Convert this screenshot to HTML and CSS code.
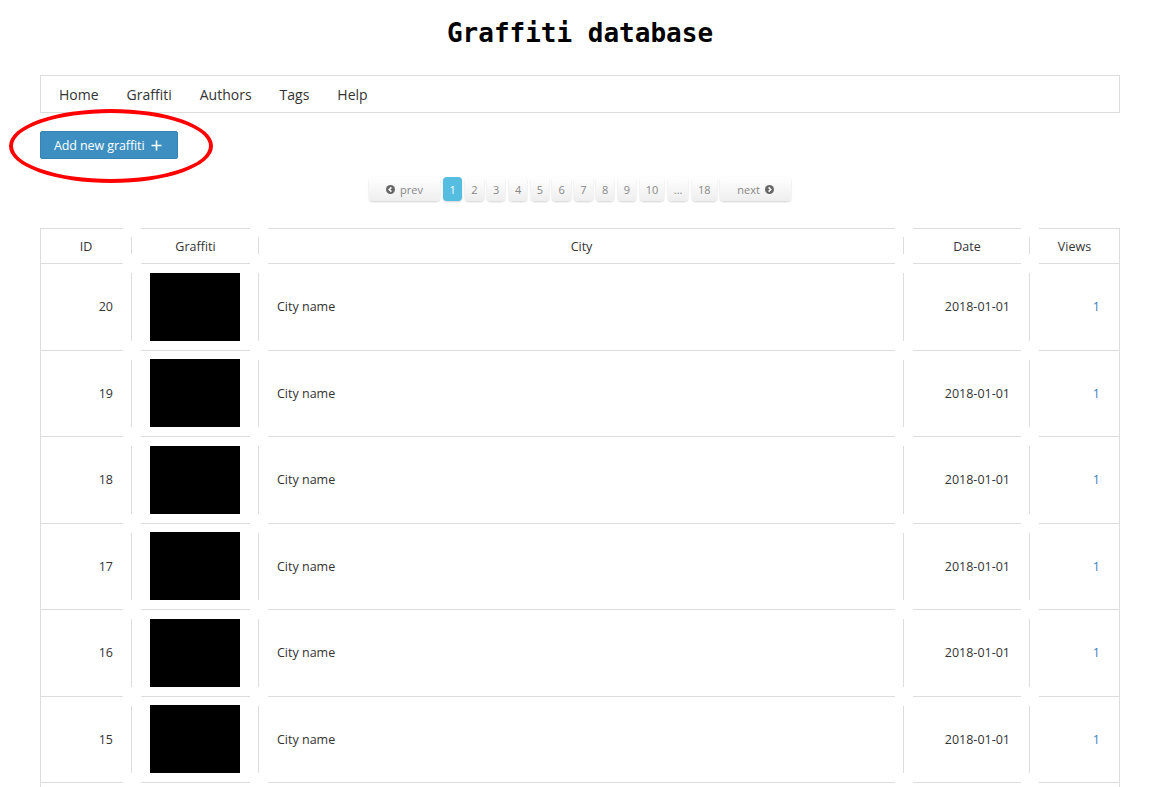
FILE: index.html
```html
<!DOCTYPE html>
<html lang="en">
<head>
<meta charset="utf-8">
<title>Graffiti database</title>
<link rel="stylesheet" href="styles.css">
</head>
<body>
<h1 class="title">Graffiti database</h1>
<nav class="nav">
  <a href="#">Home</a>
  <a href="#">Graffiti</a>
  <a href="#">Authors</a>
  <a href="#">Tags</a>
  <a href="#">Help</a>
</nav>
<div class="actions">
  <a class="btn-add" href="#">Add new graffiti
    <svg class="plus" width="11" height="11" viewBox="0 0 11 11"><path d="M5.5 0.5v10M0.5 5.5h10" stroke="#fff" stroke-width="1.6" fill="none"/></svg>
  </a>
</div>
<div class="pager">
  <a class="pg wide" href="#"><svg class="ico" width="9" height="9" viewBox="0 0 10 10"><circle cx="5" cy="5" r="5" fill="#666"/><path d="M6 2.6L3.6 5L6 7.4" stroke="#fff" stroke-width="1.7" fill="none"/></svg>prev</a>
  <a class="pg active" href="#">1</a>
  <a class="pg" href="#">2</a>
  <a class="pg" href="#">3</a>
  <a class="pg" href="#">4</a>
  <a class="pg" href="#">5</a>
  <a class="pg" href="#">6</a>
  <a class="pg" href="#">7</a>
  <a class="pg" href="#">8</a>
  <a class="pg" href="#">9</a>
  <a class="pg" href="#">10</a>
  <a class="pg" href="#">...</a>
  <a class="pg" href="#">18</a>
  <a class="pg wide" href="#">next<svg class="ico" width="9" height="9" viewBox="0 0 10 10"><circle cx="5" cy="5" r="5" fill="#666"/><path d="M4 2.6L6.4 5L4 7.4" stroke="#fff" stroke-width="1.7" fill="none"/></svg></a>
</div>
<div class="table">
  <div class="row head">
    <div class="cell c-id">ID</div><div class="sep"></div>
    <div class="cell c-img">Graffiti</div><div class="sep"></div>
    <div class="cell c-city">City</div><div class="sep"></div>
    <div class="cell c-date">Date</div><div class="sep"></div>
    <div class="cell c-views">Views</div>
  </div>
  <div class="row">
    <div class="cell c-id">20</div><div class="sep"></div>
    <div class="cell c-img"><div class="thumb"></div></div><div class="sep"></div>
    <div class="cell c-city">City name</div><div class="sep"></div>
    <div class="cell c-date">2018-01-01</div><div class="sep"></div>
    <div class="cell c-views"><a href="#">1</a></div>
  </div>
  <div class="row">
    <div class="cell c-id">19</div><div class="sep"></div>
    <div class="cell c-img"><div class="thumb"></div></div><div class="sep"></div>
    <div class="cell c-city">City name</div><div class="sep"></div>
    <div class="cell c-date">2018-01-01</div><div class="sep"></div>
    <div class="cell c-views"><a href="#">1</a></div>
  </div>
  <div class="row">
    <div class="cell c-id">18</div><div class="sep"></div>
    <div class="cell c-img"><div class="thumb"></div></div><div class="sep"></div>
    <div class="cell c-city">City name</div><div class="sep"></div>
    <div class="cell c-date">2018-01-01</div><div class="sep"></div>
    <div class="cell c-views"><a href="#">1</a></div>
  </div>
  <div class="row">
    <div class="cell c-id">17</div><div class="sep"></div>
    <div class="cell c-img"><div class="thumb"></div></div><div class="sep"></div>
    <div class="cell c-city">City name</div><div class="sep"></div>
    <div class="cell c-date">2018-01-01</div><div class="sep"></div>
    <div class="cell c-views"><a href="#">1</a></div>
  </div>
  <div class="row">
    <div class="cell c-id">16</div><div class="sep"></div>
    <div class="cell c-img"><div class="thumb"></div></div><div class="sep"></div>
    <div class="cell c-city">City name</div><div class="sep"></div>
    <div class="cell c-date">2018-01-01</div><div class="sep"></div>
    <div class="cell c-views"><a href="#">1</a></div>
  </div>
  <div class="row">
    <div class="cell c-id">15</div><div class="sep"></div>
    <div class="cell c-img"><div class="thumb"></div></div><div class="sep"></div>
    <div class="cell c-city">City name</div><div class="sep"></div>
    <div class="cell c-date">2018-01-01</div><div class="sep"></div>
    <div class="cell c-views"><a href="#">1</a></div>
  </div>
  <div class="row">
    <div class="cell c-id">14</div><div class="sep"></div>
    <div class="cell c-img"><div class="thumb"></div></div><div class="sep"></div>
    <div class="cell c-city">City name</div><div class="sep"></div>
    <div class="cell c-date">2018-01-01</div><div class="sep"></div>
    <div class="cell c-views"><a href="#">1</a></div>
  </div>
</div>
<div class="ring"></div>
</body>
</html>
```

FILE: styles.css
```css
html {
  background: #fff;
}

body {
  margin: 0 40px;
  font-family: "Open Sans", "DejaVu Sans", sans-serif;
  color: #333;
}

.title {
  margin: 18px 0 0;
  font: bold 26px/30px "DejaVu Sans Mono", monospace;
  text-align: center;
  color: #000;
}

.nav {
  margin-top: 27px;
  height: 38px;
  box-sizing: border-box;
  border: 1px solid #ddd;
  display: flex;
  align-items: flex-start;
  padding-left: 4px;
}

.nav a {
  padding: 2px 14px 0;
  line-height: 34px;
  font-size: 14px;
  color: #333;
  text-decoration: none;
}

.actions {
  margin-top: 18px;
  height: 28px;
}

.btn-add {
  display: inline-flex;
  align-items: center;
  gap: 7px;
  height: 28px;
  box-sizing: border-box;
  padding: 0 15px 0 13px;
  background: #3d8fc1;
  border: 1px solid #3784b4;
  border-radius: 2px;
  color: #fff;
  font-size: 12.5px;
  letter-spacing: -0.1px;
  text-decoration: none;
}

.ring {
  position: absolute;
  left: 9px;
  top: 109px;
  z-index: 5;
  width: 204px;
  height: 74px;
  box-sizing: border-box;
  border: 4px solid #f00;
  border-radius: 50%;
  pointer-events: none;
}

.pager {
  display: flex;
  justify-content: center;
  gap: 3.5px;
  margin-top: 18px;
}

.pg {
  display: inline-flex;
  align-items: center;
  justify-content: center;
  gap: 5px;
  height: 24px;
  min-width: 18px;
  box-sizing: border-box;
  padding: 0 6px;
  border-radius: 4px;
  background: linear-gradient(#ffffff, #eeeeee);
  box-shadow: 0 1px 2px rgba(0, 0, 0, 0.18);
  color: #888;
  font-size: 11px;
  text-decoration: none;
}

.pg.wide {
  width: 71px;
}

.pg.active {
  background: #55bde0;
  color: #fff;
}

.table {
  margin-top: 27px;
  border-left: 1px solid #ddd;
  border-right: 1px solid #ddd;
  font-size: 12.5px;
}

.row {
  display: grid;
  grid-template-columns: 82px 18px 109px 18px 1fr 18px 108px 18px 80px;
  height: 86.5px;
}

.row.head {
  height: 36px;
  margin-top: 1px;
}

.cell {
  display: flex;
  align-items: center;
  box-sizing: border-box;
  border-bottom: 1px solid #ddd;
}

.head .cell {
  border-top: 1px solid #ddd;
  justify-content: center;
  padding: 0;
}

.sep {
  display: flex;
  padding: 9px 0 10px 8px;
  box-sizing: border-box;
}

.sep::before {
  content: "";
  flex: 0 0 auto;
  border-left: 1px solid #ddd;
}

.c-id {
  justify-content: flex-end;
  padding-right: 10px;
}

.head .c-id {
  padding-left: 8px;
}

.c-img {
  padding-left: 9px;
}

.thumb {
  width: 90px;
  height: 68px;
  background: #000;
}

.c-city {
  padding-left: 9px;
}

.c-date {
  justify-content: flex-end;
  padding-right: 11px;
}

.c-views {
  justify-content: flex-end;
  padding-right: 19px;
}

.head .c-views {
  padding-right: 9px;
}

.c-views a {
  color: #3a7fc0;
  text-decoration: none;
}
```
